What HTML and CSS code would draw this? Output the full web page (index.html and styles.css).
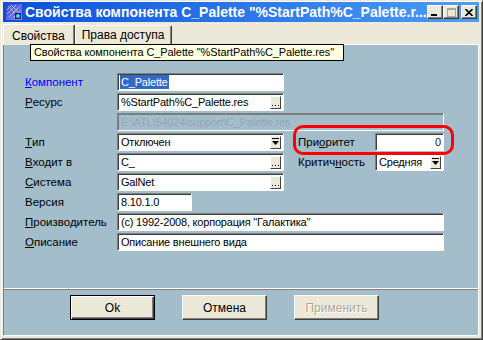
FILE: index.html
```html
<!DOCTYPE html>
<html>
<head>
    <meta charset="utf-8">
    <title>Свойства компонента C_Palette</title>
    <link rel="stylesheet" href="styles.css">
</head>
<body>
    <div class="window">
        <div class="titlebar">
            <svg class="app-icon" width="16" height="16" viewBox="0 0 16 16">
                <defs>
                    <linearGradient id="ig" x1="0" y1="0" x2="1" y2="1">
                        <stop offset="0" stop-color="#2a3fd8"/>
                        <stop offset="1" stop-color="#9a8cf0"/>
                    </linearGradient>
                </defs>
                <rect x="0" y="0" width="16" height="16" fill="url(#ig)"/>
                <path d="M1 6 L6 1 M1 10 L10 1 M3 13 L13 3 M7 14 L14 7" stroke="#c8d0ff" stroke-width="0.8" fill="none"/>
                <path d="M2 2 L9 9 M5 1 L12 8" stroke="#ffffff" stroke-width="0.7" fill="none" opacity="0.7"/>
                <rect x="9" y="9" width="6" height="6" fill="#1a1a8a"/>
                <circle cx="12" cy="12" r="2" fill="#40e0d0"/>
            </svg>
            <span class="title">Свойства компонента C_Palette "%StartPath%C_Palette.r...</span>
            <div class="caption-buttons">
                <span class="cap-btn">
                    <svg width="8" height="7" viewBox="0 0 8 7"><rect x="0" y="5" width="6" height="2" fill="#000"/></svg>
                </span>
                <span class="cap-btn">
                    <svg width="9" height="9" viewBox="0 0 9 9"><rect x="0.5" y="0.5" width="8" height="8" fill="none" stroke="#aca899"/><rect x="0" y="0" width="9" height="2" fill="#aca899"/></svg>
                </span>
                <span class="cap-btn close">
                    <svg width="8" height="7" viewBox="0 0 8 7"><path d="M0.5 0 L7.5 7 M7.5 0 L0.5 7" stroke="#000" stroke-width="1.6"/></svg>
                </span>
            </div>
        </div>

        <div class="tabs">
            <div class="tab active">Свойства</div>
            <div class="tab">Права доступа</div>
        </div>

        <div class="client">
            <div class="page">
                <div class="form">
                    <span class="label link"><u>К</u>омпонент</span>
                    <div class="field"><span class="selected">C_Palette</span></div>

                    <span class="label"><u>Р</u>есурс</span>
                    <div class="field"><span class="value">%StartPath%C_Palette.res</span><span class="mini-btn"><svg width="7" height="8" viewBox="0 0 7 8"><rect x="0" y="7" width="1" height="1" fill="#000"/><rect x="3" y="7" width="1" height="1" fill="#000"/><rect x="6" y="7" width="1" height="1" fill="#000"/></svg></span></div>

                    <div class="field disabled wide">E:\ATL\54024\support\C_Palette.res</div>

                    <span class="label"><u>Т</u>ип</span>
                    <div class="field"><span class="value">Отключен</span><span class="mini-btn"><svg width="7" height="8" viewBox="0 0 7 8"><rect x="0" y="0" width="7" height="1" fill="#000"/><path d="M0 3 H7 L3.5 7 Z" fill="#000"/></svg></span></div>
                    <span class="label side">При<u>о</u>ритет</span>
                    <div class="field number side-field">0</div>

                    <span class="label"><u>В</u>ходит в</span>
                    <div class="field"><span class="value">C_</span><span class="mini-btn"><svg width="7" height="8" viewBox="0 0 7 8"><rect x="0" y="7" width="1" height="1" fill="#000"/><rect x="3" y="7" width="1" height="1" fill="#000"/><rect x="6" y="7" width="1" height="1" fill="#000"/></svg></span></div>
                    <span class="label side">Критич<u>н</u>ость</span>
                    <div class="field side-field"><span class="value">Средняя</span><span class="mini-btn"><svg width="7" height="8" viewBox="0 0 7 8"><rect x="0" y="0" width="7" height="1" fill="#000"/><path d="M0 3 H7 L3.5 7 Z" fill="#000"/></svg></span></div>

                    <span class="label"><u>С</u>истема</span>
                    <div class="field"><span class="value">GalNet</span><span class="mini-btn"><svg width="7" height="8" viewBox="0 0 7 8"><rect x="0" y="7" width="1" height="1" fill="#000"/><rect x="3" y="7" width="1" height="1" fill="#000"/><rect x="6" y="7" width="1" height="1" fill="#000"/></svg></span></div>

                    <span class="label">Версия</span>
                    <div class="field short">8.10.1.0</div>

                    <span class="label"><u>П</u>роизводитель</span>
                    <div class="field wide">(c) 1992-2008, корпорация "Галактика"</div>

                    <span class="label"><u>О</u>писание</span>
                    <div class="field wide">Описание внешнего вида</div>
                </div>
            </div>
            <div class="footer">
                <button class="btn default">Ok</button>
                <button class="btn">Отмена</button>
                <button class="btn" disabled>Применить</button>
            </div>
        </div>

        <div class="tooltip">Свойства компонента C_Palette "%StartPath%C_Palette.res"</div>
        <div class="highlight"></div>
    </div>
</body>
</html>
```

FILE: styles.css
```css
body {
    margin: 0;
    background-color: #ece9d8;
    font-family: "Liberation Sans", Arial, sans-serif;
    font-size: 11px;
    color: #000;
}

.window {
    position: relative;
    width: 483px;
    height: 340px;
    box-sizing: border-box;
    padding: 1px 3px 3px 2px;
    border: 1px solid;
    border-color: #ece9d8 #404040 #404040 #ece9d8;
    box-shadow: inset 1px 1px #fff, inset -1px -1px #808080;
    display: flex;
    flex-direction: column;
}

.titlebar {
    height: 20px;
    display: flex;
    align-items: center;
    background: linear-gradient(to right, #0a4fdc, #4d9df8);
    color: #fff;
    flex: none;
}

.app-icon {
    margin: 0 3px 0 3px;
    flex: none;
}

.title {
    font-weight: bold;
    font-size: 14px;
    white-space: nowrap;
    overflow: hidden;
    flex: 1;
}

.caption-buttons {
    display: flex;
    align-items: center;
    margin-right: 2px;
    flex: none;
}

.cap-btn {
    width: 16px;
    height: 14px;
    box-sizing: border-box;
    background-color: #ece9d8;
    border: 1px solid;
    border-color: #fff #404040 #404040 #fff;
    box-shadow: inset -1px -1px #808080;
    display: flex;
    align-items: center;
    justify-content: center;
}

.cap-btn.close {
    margin-left: 2px;
}

.tabs {
    height: 22px;
    display: flex;
    align-items: flex-end;
    flex: none;
    position: relative;
    z-index: 1;
}

.tab {
    height: 19px;
    box-sizing: border-box;
    padding: 2px 7px 0 6px;
    border-top: 1px solid #fff;
    border-left: 1px solid #fff;
    border-right: 1px solid #404040;
    box-shadow: inset -1px 0 #808080;
    border-radius: 2px 2px 0 0;
    font-size: 12px;
    line-height: 15px;
}

.tab.active {
    height: 21px;
    padding: 4px 9px 0 8px;
    margin-bottom: -1px;
    background-color: #ece9d8;
}

.client {
    flex: 1;
    display: flex;
    flex-direction: column;
    border-left: 1px solid #808080;
    border-right: 1px solid #fff;
    border-bottom: 1px solid #fff;
    background-color: #a3bdcb;
}

.page {
    height: 243px;
    border-top: 1px solid #fff;
    border-bottom: 1px solid #fff;
    flex: none;
}

.form {
    display: grid;
    grid-template-columns: 92px 167px 14px 77px 69px;
    grid-auto-rows: 18px;
    row-gap: 2px;
    padding: 28px 0 0 21px;
}

.label {
    grid-column: 1;
    display: flex;
    align-items: center;
    font-size: 11.5px;
    white-space: nowrap;
}

.label.link {
    color: #0000ff;
}

.label.side {
    grid-column: 4;
}

.field {
    grid-column: 2;
    box-sizing: border-box;
    height: 18px;
    background-color: #fff;
    border: 1px solid;
    border-color: #808080 #fff #fff #808080;
    box-shadow: inset 1px 1px #404040;
    padding: 0 2px 0 3px;
    display: flex;
    align-items: center;
    white-space: nowrap;
    overflow: hidden;
    font-size: 11px;
    letter-spacing: -0.2px;
}

.field .value {
    flex: 1;
}

.field.wide {
    grid-column: 2 / span 4;
}

.field.short {
    width: 75px;
}

.field.side-field {
    grid-column: 5;
}

.field.disabled {
    background-color: #a3bdcb;
    color: #93a6b0;
    box-shadow: inset 1px 1px #6e7f88;
}

.field.number {
    justify-content: flex-end;
    color: #202050;
}

.selected {
    background-color: #316ac5;
    color: #fff;
    padding: 0 1px;
    margin-left: -1px;
    line-height: 14px;
}

.mini-btn {
    width: 11px;
    height: 13px;
    box-sizing: border-box;
    background-color: #ece9d8;
    border: 1px solid;
    border-color: #fff #404040 #404040 #fff;
    display: flex;
    align-items: center;
    justify-content: center;
    flex: none;
}

.footer {
    flex: 1;
    border-top: 1px solid #808080;
    display: flex;
    gap: 27px;
    padding: 5px 0 0 66px;
    align-items: flex-start;
}

.btn {
    width: 85px;
    height: 25px;
    box-sizing: border-box;
    background-color: #ece9d8;
    border: 1px solid;
    border-color: #fff #404040 #404040 #fff;
    box-shadow: inset -1px -1px #808080;
    font-family: "Liberation Sans", Arial, sans-serif;
    font-size: 12px;
    color: #000;
    padding: 0;
}

.btn.default {
    border: 1px solid #000;
    box-shadow: inset 1px 1px #fff, inset -1px -1px #404040, inset -2px -2px #808080;
}

.btn:disabled {
    color: #aca899;
    text-shadow: 1px 1px #fff;
}

.tooltip {
    position: absolute;
    left: 29px;
    top: 43px;
    width: 314px;
    height: 17px;
    box-sizing: border-box;
    border: 1px solid #000;
    background-color: #ffffe1;
    padding: 0 3px;
    font-size: 11px;
    letter-spacing: -0.1px;
    line-height: 15px;
    white-space: nowrap;
    overflow: hidden;
    z-index: 5;
}

.highlight {
    position: absolute;
    left: 292px;
    top: 124px;
    width: 161px;
    height: 30px;
    box-sizing: border-box;
    border: 3px solid #ff0000;
    border-radius: 10px;
    z-index: 5;
}
```
